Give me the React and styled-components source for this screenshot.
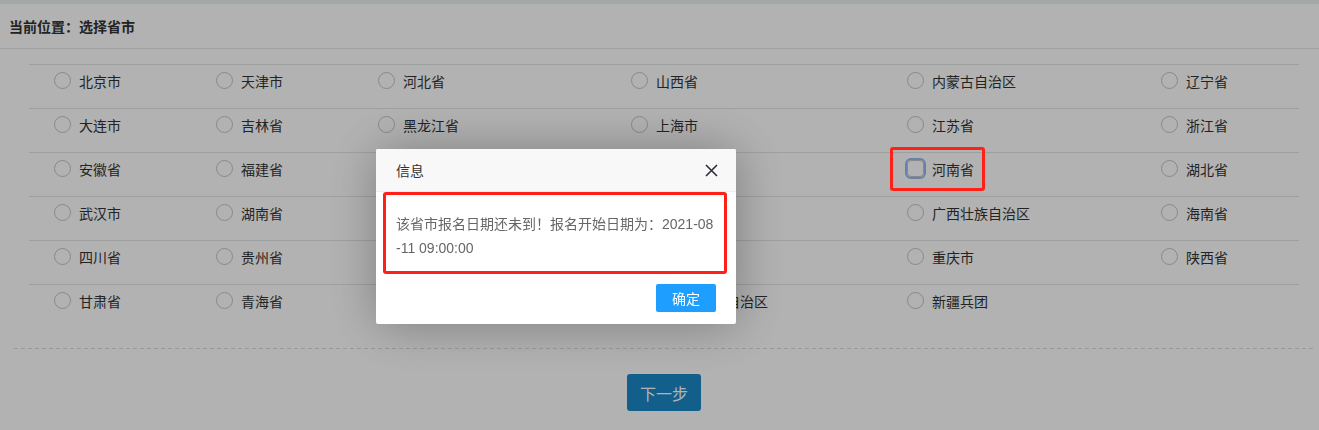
import React from 'react';
import styled, { createGlobalStyle } from 'styled-components';

const GlobalStyle = createGlobalStyle`
  html, body {
    margin: 0;
    padding: 0;
    background: #fff;
    font-family: "Liberation Sans", "Noto Sans CJK SC", sans-serif;
    font-size: 14px;
    color: #333;
  }
`;

const provinces = [
  ['北京市', '天津市', '河北省', '山西省', '内蒙古自治区', '辽宁省'],
  ['大连市', '吉林省', '黑龙江省', '上海市', '江苏省', '浙江省'],
  ['安徽省', '福建省', '江西省', '山东省', '河南省', '湖北省'],
  ['武汉市', '湖南省', '广东省', '深圳市', '广西壮族自治区', '海南省'],
  ['四川省', '贵州省', '云南省', '西藏自治区', '重庆市', '陕西省'],
  ['甘肃省', '青海省', '宁夏回族自治区', '新疆维吾尔自治区', '新疆兵团'],
];

const Page = styled.div`
  border-top: 4px solid #edf1f1;
`;

const Crumb = styled.div`
  height: 44px;
  display: flex;
  align-items: center;
  padding-left: 9px;
  font-weight: bold;
  font-size: 14px;
  color: #333;
  border-bottom: 1px solid #e4e9e9;
`;

const Table = styled.div`
  margin: 15px 20px 0 29px;
`;

const Row = styled.div`
  display: grid;
  grid-template-columns: 162px 162px 253px 276px 254px 1fr;
  height: 43px;
  border-top: 1px solid #e2e6e6;
`;

const Cell = styled.label`
  position: relative;
  display: flex;
  align-items: center;
  gap: 8px;
  padding: 0 0 12px 25px;
  color: #333;
  font-size: 14px;
`;

const Radio = styled.span`
  box-sizing: border-box;
  width: 17px;
  height: 17px;
  border-radius: ${p => (p.$focus ? '4px' : '50%')};
  border: 1px solid #c4c4c4;
  background: #fff;
  flex: none;
  outline: ${p => (p.$focus ? '2px solid #97b9f0' : 'none')};
`;

const Mark = styled.span`
  position: absolute;
  z-index: 30;
  left: 8px;
  top: -6px;
  width: 95px;
  height: 44px;
  box-sizing: border-box;
  border: 3px solid #ff2117;
  border-radius: 3px;
`;

const Dashed = styled.div`
  margin: 20px 4px 0 14px;
  height: 1px;
  background: repeating-linear-gradient(90deg, #dcdcdc 0 4px, transparent 4px 7px);
`;

const Actions = styled.div`
  display: flex;
  justify-content: center;
  padding: 25px 0 0 9px;
`;

const NextButton = styled.button`
  width: 74px;
  height: 37px;
  border: none;
  border-radius: 3px;
  background: #1b88c8;
  color: #fff;
  font-family: inherit;
  font-size: 16px;
  cursor: pointer;
`;

const Shade = styled.div`
  position: fixed;
  inset: 0;
  z-index: 10;
  background: rgba(0, 0, 0, 0.3);
`;

const Dialog = styled.div`
  position: fixed;
  z-index: 20;
  left: 376px;
  top: 149px;
  width: 360px;
  background: #fff;
  border-radius: 2px;
  box-shadow: 1px 1px 50px rgba(0, 0, 0, 0.3);
`;

const DialogHead = styled.div`
  height: 42px;
  display: flex;
  align-items: center;
  justify-content: space-between;
  padding: 0 18px 0 20px;
  background: #f8f8f8;
  border-bottom: 1px solid #eee;
  border-radius: 2px 2px 0 0;
  color: #333;
  font-size: 14px;
`;

const Close = styled.svg`
  width: 13px;
  height: 13px;
  cursor: pointer;
`;

const DialogBody = styled.div`
  position: relative;
  padding: 20px;
  line-height: 24px;
  font-size: 14px;
  color: #666;
  word-break: break-all;
`;

const BodyMark = styled.span`
  position: absolute;
  left: 7px;
  right: 9px;
  top: 0;
  bottom: 6px;
  border: 3px solid #ff2117;
  border-radius: 3px;
`;

const DialogFoot = styled.div`
  display: flex;
  justify-content: flex-end;
  padding: 4px 20px 12px;
`;

const OkButton = styled.button`
  width: 60px;
  height: 28px;
  border: none;
  border-radius: 2px;
  background: #1e9fff;
  color: #fff;
  font-family: inherit;
  font-size: 14px;
  cursor: pointer;
`;

export default function App() {
  return (
    <>
      <GlobalStyle />
      <Page>
        <Crumb>当前位置：选择省市</Crumb>
        <Table>
          {provinces.map((row, i) => (
            <Row key={i}>
              {row.map(name => (
                <Cell key={name}>
                  <Radio $focus={name === '河南省'} />
                  {name}
                  {name === '河南省' && <Mark />}
                </Cell>
              ))}
            </Row>
          ))}
        </Table>
        <Dashed />
        <Actions>
          <NextButton>下一步</NextButton>
        </Actions>
      </Page>
      <Shade />
      <Dialog>
        <DialogHead>
          信息
          <Close viewBox="0 0 13 13">
            <path d="M1 1 L12 12 M12 1 L1 12" stroke="#2e2d3c" strokeWidth="1.6" />
          </Close>
        </DialogHead>
        <DialogBody>
          该省市报名日期还未到！报名开始日期为：2021-08-11 09:00:00
          <BodyMark />
        </DialogBody>
        <DialogFoot>
          <OkButton>确定</OkButton>
        </DialogFoot>
      </Dialog>
    </>
  );
}
